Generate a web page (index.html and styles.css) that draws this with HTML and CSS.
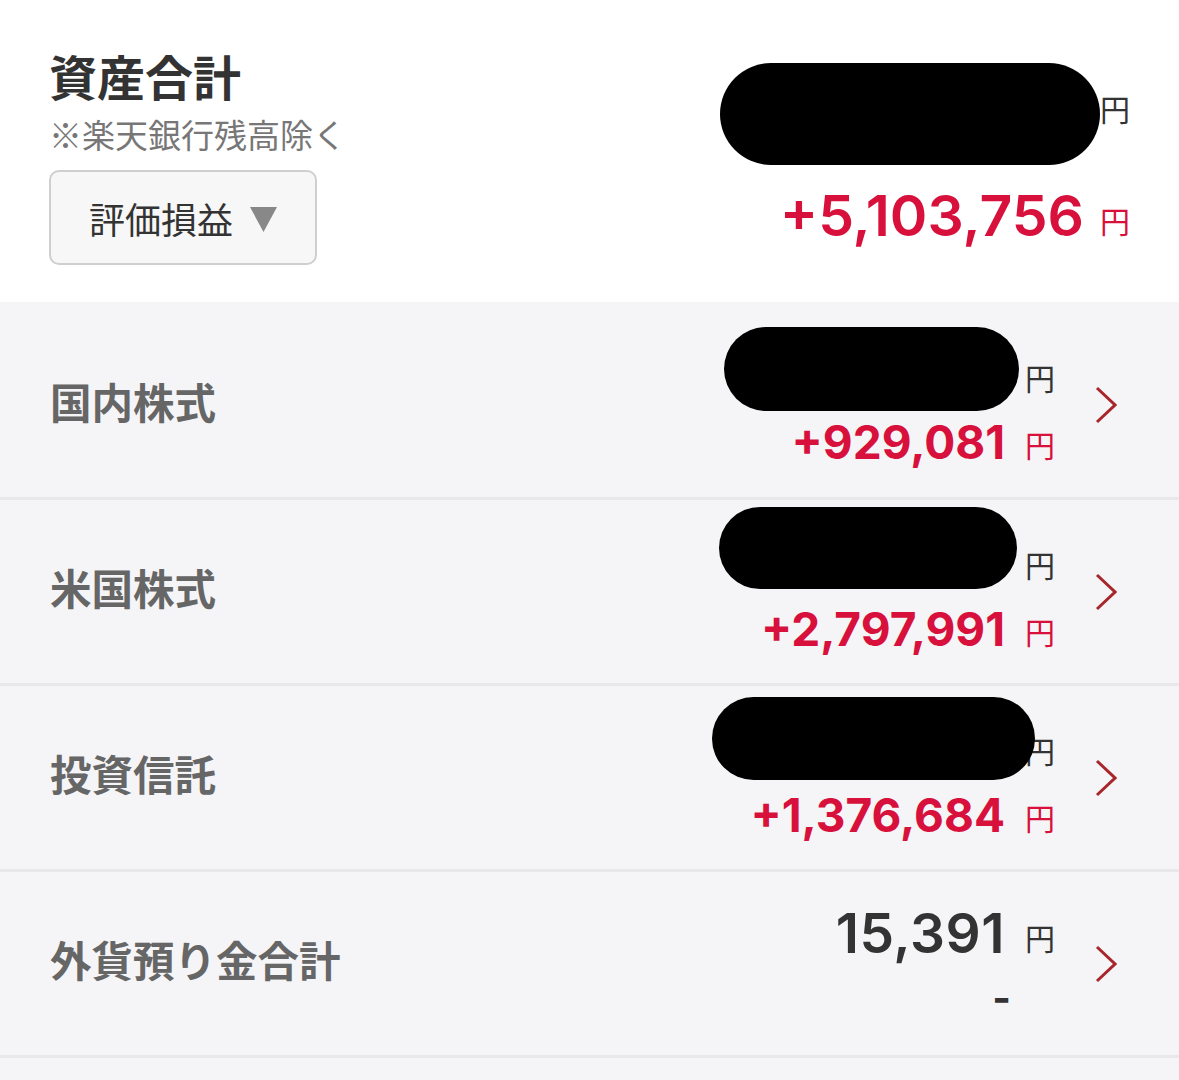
FILE: index.html
```html
<!DOCTYPE html>
<html lang="ja">
  <head>
    <meta charset="UTF-8" />
    <meta name="viewport" content="width=device-width, initial-scale=1">
    <title>資産合計</title>
    <link rel="stylesheet" href="styles.css">
  </head>
  <body>
    <div class="summary">
      <div class="summary-left">
        <h1 class="title">資産合計</h1>
        <p class="note">※楽天銀行残高除く</p>
        <button class="select">
          評価損益
          <svg class="tri" width="27" height="25" viewBox="0 0 27 25"><path d="M0 0H27L13.5 25Z" fill="#888"/></svg>
        </button>
      </div>
      <div class="summary-right">
        <div class="amount"><span class="mask mask-total"></span><span class="yen">円</span></div>
        <div class="gain gain-total">+5,103,756<span class="yen">円</span></div>
      </div>
    </div>

    <ul class="list">
      <li class="row">
        <span class="label">国内株式</span>
        <div class="values">
          <div class="amount"><span class="mask" style="width:295px;height:84px;margin-right:6px"></span><span class="yen">円</span></div>
          <div class="gain">+929,081<span class="yen">円</span></div>
        </div>
        <svg class="chevron" width="22" height="38" viewBox="0 0 22 38"><path d="M2 2L20 19L2 36" fill="none" stroke="#a8262b" stroke-width="3"/></svg>
      </li>
      <li class="row">
        <span class="label">米国株式</span>
        <div class="values">
          <div class="amount"><span class="mask" style="width:298px;height:82px;top:-9px;margin-right:8px"></span><span class="yen">円</span></div>
          <div class="gain">+2,797,991<span class="yen">円</span></div>
        </div>
        <svg class="chevron" width="22" height="38" viewBox="0 0 22 38"><path d="M2 2L20 19L2 36" fill="none" stroke="#a8262b" stroke-width="3"/></svg>
      </li>
      <li class="row">
        <span class="label">投資信託</span>
        <div class="values">
          <div class="amount"><span class="mask" style="width:323px;height:83px;top:-4px;margin-right:-10px"></span><span class="yen">円</span></div>
          <div class="gain">+1,376,684<span class="yen">円</span></div>
        </div>
        <svg class="chevron" width="22" height="38" viewBox="0 0 22 38"><path d="M2 2L20 19L2 36" fill="none" stroke="#a8262b" stroke-width="3"/></svg>
      </li>
      <li class="row">
        <span class="label">外貨預り金合計</span>
        <div class="values values-plain">
          <div class="amount amount-plain">15,391<span class="yen">円</span></div>
          <div class="dash">-</div>
        </div>
        <svg class="chevron" width="22" height="38" viewBox="0 0 22 38"><path d="M2 2L20 19L2 36" fill="none" stroke="#a8262b" stroke-width="3"/></svg>
      </li>
    </ul>
  </body>
</html>
```

FILE: styles.css
```css
body {
  margin: 0;
  background: #f5f5f7;
  font-family: "Noto Sans CJK JP", sans-serif;
  color: #333;
}

.summary {
  display: flex;
  justify-content: space-between;
  background: #fff;
  height: 302px;
  padding: 0 49px;
  box-sizing: border-box;
}

.summary-left {
  padding-top: 44px;
}

.title {
  margin: 0;
  font-size: 48px;
  line-height: 62px;
  font-weight: 700;
  color: #333;
}

.note {
  margin: 6px 0 0;
  font-size: 33px;
  line-height: 44px;
  color: #777;
}

.select {
  display: flex;
  align-items: center;
  gap: 17px;
  margin-top: 14px;
  width: 268px;
  height: 95px;
  padding: 0 0 0 38px;
  border: 2px solid #cfcfcf;
  border-radius: 10px;
  background: #f7f7f7;
  font-family: "Noto Sans CJK JP", sans-serif;
  font-size: 36px;
  color: #333;
}

.tri {
  margin-top: 4px;
}

.summary-right {
  display: flex;
  flex-direction: column;
  align-items: flex-end;
  padding-top: 63px;
}

.amount,
.gain {
  display: flex;
  align-items: flex-end;
  font-family: Inter, "Noto Sans CJK JP", sans-serif;
}

.mask {
  position: relative;
  z-index: 1;
  display: inline-block;
  border-radius: 42px;
  background: #000;
}

.mask-total {
  width: 380px;
  height: 102px;
  border-radius: 51px;
}

.yen {
  font-family: "Noto Sans CJK JP", sans-serif;
  font-size: 30px;
  line-height: 36px;
  font-weight: 400;
  margin-left: 20px;
}

.summary-right .amount .yen {
  margin-left: 0;
  margin-bottom: 39px;
}

.gain {
  color: #d7103c;
  font-weight: 700;
  font-size: 46px;
  line-height: 48px;
}

.gain-total {
  margin-top: 21px;
  font-weight: 600;
  font-size: 57px;
  line-height: 60px;
}

.gain-total .yen {
  margin-left: 16px;
  margin-bottom: 8px;
}

.list {
  list-style: none;
  margin: 0;
  padding: 0;
}

.row {
  display: flex;
  align-items: center;
  box-sizing: border-box;
  height: 186px;
  padding: 0 62px 9px 50px;
  border-bottom: 3px solid #e8e8ea;
}

.row:first-child {
  height: 198px;
  padding-top: 11px;
}

.label {
  flex: 1;
  font-size: 41.5px;
  font-weight: 700;
  color: #666;
}

.values {
  display: flex;
  flex-direction: column;
  align-items: flex-end;
  margin-right: 40px;
  padding-bottom: 8px;
}

.values .amount {
  height: 84px;
}

.values .amount .yen {
  margin-left: 0;
  margin-bottom: 16px;
}

.values .gain {
  margin-top: 7px;
}

.values .gain .yen {
  color: #d7103c;
  margin-left: 20px;
  margin-bottom: 4px;
}

.values-plain {
  padding-top: 13px;
}

.values .amount-plain {
  height: auto;
  font-size: 55px;
  line-height: 62px;
  font-weight: 600;
  letter-spacing: 0.5px;
  color: #333;
}

.values .amount-plain .yen {
  margin-left: 20px;
  margin-bottom: 9px;
  letter-spacing: 0;
}

.dash {
  font-family: Inter, sans-serif;
  font-size: 40px;
  font-weight: 700;
  line-height: 48px;
  margin-right: 44px;
  margin-top: 10px;
}

.chevron {
  flex: none;
  margin-top: 9px;
}
```
